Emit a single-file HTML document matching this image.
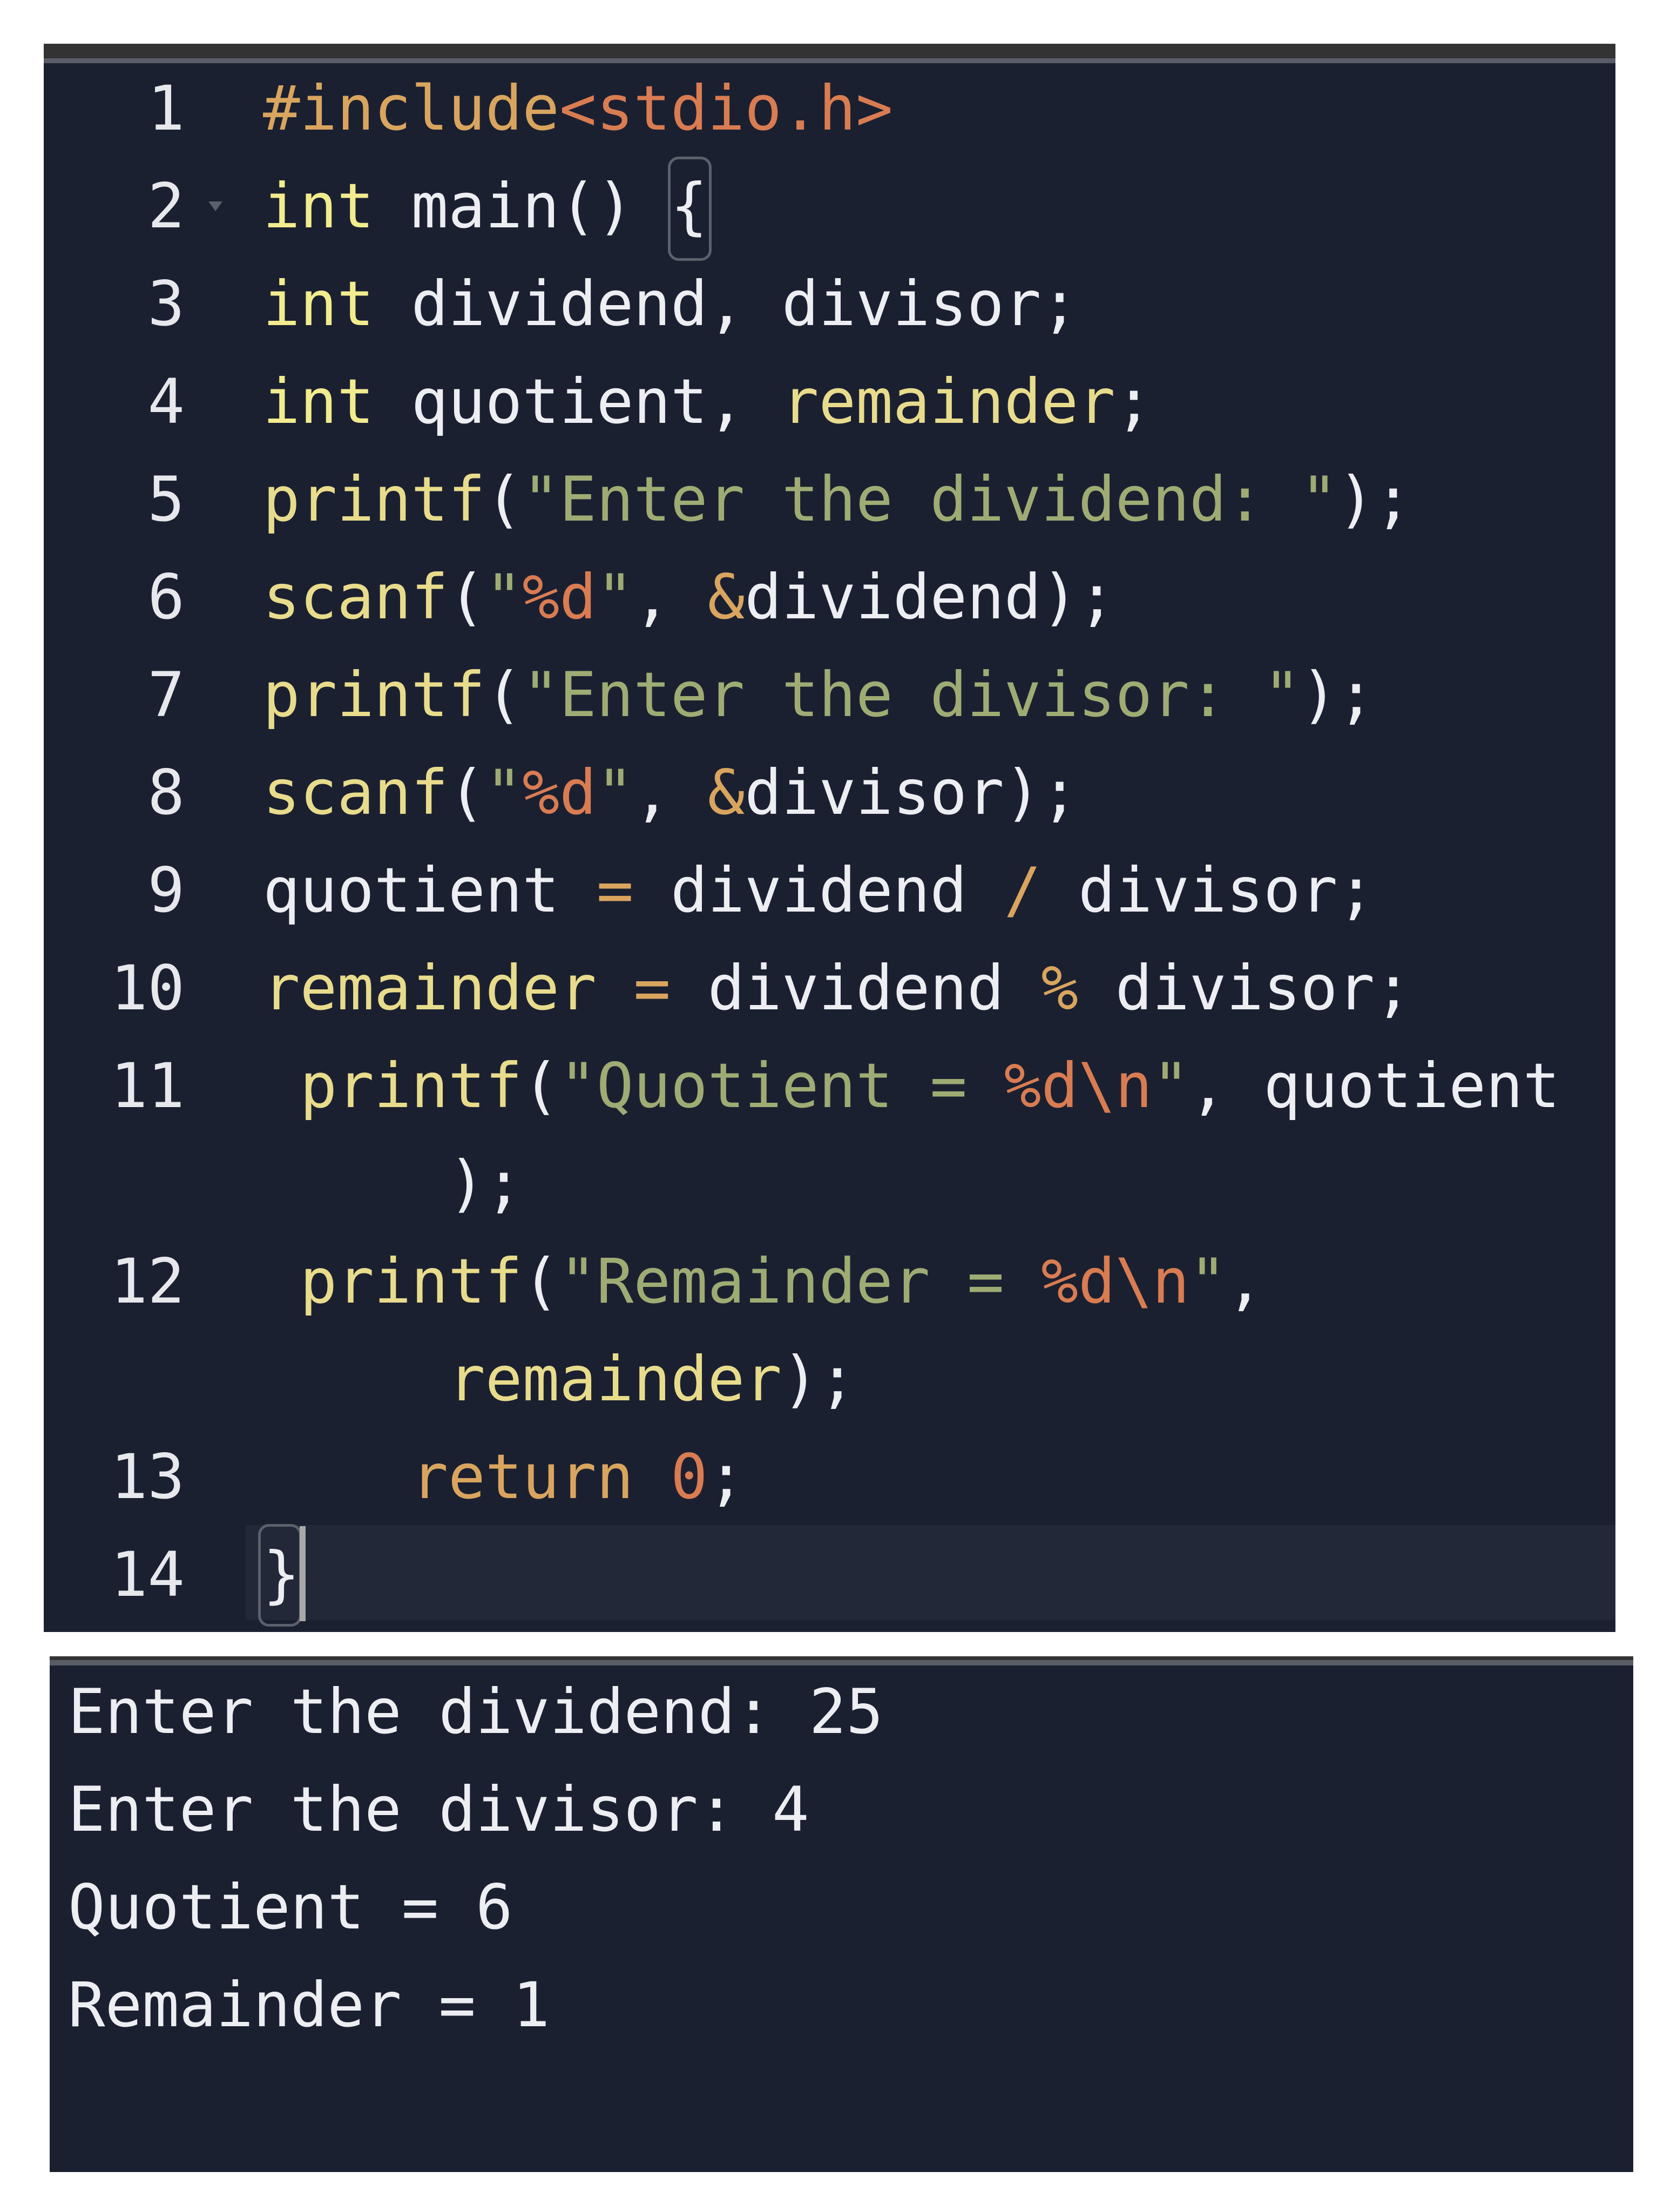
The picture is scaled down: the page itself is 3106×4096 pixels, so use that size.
<!DOCTYPE html>
<html><head><meta charset="utf-8"><style>
html,body{margin:0;padding:0;background:#fff;width:3106px;height:4096px;overflow:hidden;position:relative}
.p{position:absolute;background:#1b2031}
.ln,.c,.o{position:absolute;font-family:"DejaVu Sans Mono","Liberation Mono",monospace;font-size:114px;line-height:181px;white-space:pre;color:#eceef2}
.ln{left:160px;width:182px;text-align:right;color:#e6e8ec}
.c{left:487px}
.y{color:#e8dc8c}.k{color:#f2ec8e}.s{color:#9eac74}.o2{color:#d9a55e}.r{color:#d97c52}.w{color:#eceef2}
</style></head><body>
<div class="p" style="left:81px;top:81px;width:2911px;height:2941px">
<div style="position:absolute;left:0;top:0;right:0;height:27px;background:#333"></div>
<div style="position:absolute;left:0;top:27px;right:0;height:9px;background:#5a5d68"></div>
<div style="position:absolute;left:374px;top:2743px;right:0;height:176px;background:#232838"></div>
</div>
<div style="position:absolute;left:1237px;top:290px;width:71px;height:183px;border:5px solid #5b606c;border-radius:20px;box-sizing:content-box"></div>
<div style="position:absolute;left:478px;top:2822px;width:71px;height:180px;border:5px solid #5b606c;border-radius:20px"></div>
<div style="position:absolute;left:555px;top:2826px;width:11px;height:176px;background:#a8a8a8"></div>
<div style="position:absolute;left:386px;top:373px;width:0;height:0;border-left:13px solid transparent;border-right:13px solid transparent;border-top:18px solid #5b606c"></div>
<div class="ln" style="top:110px">1
2
3
4
5
6
7
8
9
10
11

12

13
14</div>
<div class="c" style="top:110px"><span class="o2">#include</span><span class="r">&lt;stdio.h&gt;</span>
<span class="k">int</span> main() {
<span class="k">int</span> dividend, divisor;
<span class="k">int</span> quotient, <span class="y">remainder</span>;
<span class="y">printf</span>(<span class="s">"Enter the dividend: "</span>);
<span class="y">scanf</span>(<span class="s">"</span><span class="r">%d</span><span class="s">"</span>, <span class="o2">&amp;</span>dividend);
<span class="y">printf</span>(<span class="s">"Enter the divisor: "</span>);
<span class="y">scanf</span>(<span class="s">"</span><span class="r">%d</span><span class="s">"</span>, <span class="o2">&amp;</span>divisor);
quotient <span class="o2">=</span> dividend <span class="o2">/</span> divisor;
<span class="y">remainder</span> <span class="o2">=</span> dividend <span class="o2">%</span> divisor;
 <span class="y">printf</span>(<span class="s">"Quotient = </span><span class="r">%d\n</span><span class="s">"</span>, quotient
     );
 <span class="y">printf</span>(<span class="s">"Remainder = </span><span class="r">%d\n</span><span class="s">"</span>,
     <span class="y">remainder</span>);
    <span class="o2">return</span> <span class="r">0</span>;
}</div>
<div class="p" style="left:92px;top:3067px;width:2933px;height:955px">
<div style="position:absolute;left:0;top:0;right:0;height:7px;background:#333"></div>
<div style="position:absolute;left:0;top:7px;right:0;height:10px;background:#5a5d68"></div>
</div>
<div class="o" style="left:126px;top:3079px">Enter the dividend: 25
Enter the divisor: 4
Quotient = 6
Remainder = 1</div>
</body></html>
